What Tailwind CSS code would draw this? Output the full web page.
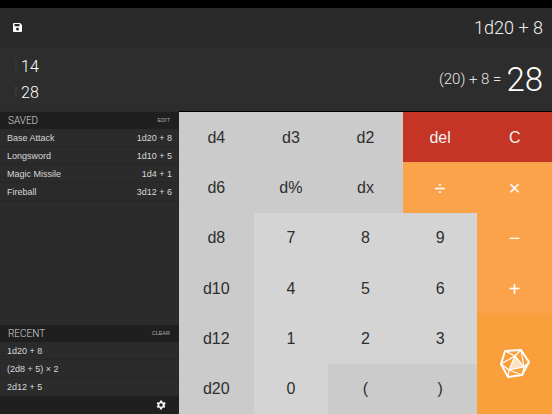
<!DOCTYPE html>
<html lang="en">
<head>
<meta charset="UTF-8">
<title>Dice Calculator</title>
<script src="https://cdn.jsdelivr.net/npm/@tailwindcss/browser@4"></script>
</head>
<body class="w-[552px] h-[414px] overflow-hidden bg-black font-['Liberation_Sans'] text-white">
<div class="flex flex-col h-full pt-[8px]">
  <!-- expression -->
  <header class="h-[39px] shrink-0 flex items-center justify-between pl-[13px] pr-[9px] bg-[#2a2a2a]">
    <svg class="w-[9px] h-[9px]" viewBox="0 0 9 9"><path fill="#fff" fill-rule="evenodd" d="M1 0h6l2 2v6a1 1 0 0 1-1 1H1a1 1 0 0 1-1-1V1a1 1 0 0 1 1-1zM1.500 1v2.200h5V1zM4.500 4.600a1.500 1.500 0 1 0 0 3 1.500 1.500 0 0 0 0-3z"/></svg>
    <span class="font-['Roboto'] text-[18px] leading-none font-light text-[#f2f2f2]">1d20 + 8</span>
  </header>
  <!-- results -->
  <section class="h-[64px] shrink-0 flex items-center justify-between pl-[14px] pr-[9px] bg-[#2d2d2d] font-['Roboto'] font-light">
    <div class="flex flex-col gap-[8px] pt-[2px]">
      <div class="flex items-center gap-[3px]">
        <span class="w-[4px] text-[3px] leading-[3.500px] text-center text-[#666]">H<br>A<br>L<br>F</span>
        <span class="text-[16px] leading-[18px]">14</span>
      </div>
      <div class="flex items-center gap-[3px]">
        <span class="w-[4px] text-[3px] leading-[3.500px] text-center text-[#666]">M<br>A<br>X</span>
        <span class="text-[16px] leading-[18px]">28</span>
      </div>
    </div>
    <div class="flex items-center gap-[5px]">
      <span class="text-[15px] text-[#e6e6e6]">(20) + 8 =</span>
      <span class="text-[33px] leading-none">28</span>
    </div>
  </section>
  <div class="flex-1 flex min-h-0">
    <!-- sidebar -->
    <aside class="w-[179px] shrink-0 flex flex-col bg-[#2b2b2b] text-[#d8d8d8]">
      <div class="h-[17px] mt-[1px] flex items-center justify-between pl-[8px] pr-[9px] bg-[#1f1f1f]">
        <span class="font-['Roboto'] text-[10px] font-light">SAVED</span><span class="text-[5.500px] text-[#aaa]">EDIT</span>
      </div>
      <ul class="text-[9px]">
        <li class="h-[18px] pt-[2px] flex items-center justify-between px-[7px] border-b border-[#262626]"><span>Base Attack</span><span>1d20 + 8</span></li>
        <li class="h-[18px] pt-[2px] flex items-center justify-between px-[7px] border-b border-[#262626]"><span>Longsword</span><span>1d10 + 5</span></li>
        <li class="h-[18px] pt-[2px] flex items-center justify-between px-[7px] border-b border-[#262626]"><span>Magic Missile</span><span>1d4 + 1</span></li>
        <li class="h-[18px] pt-[2px] flex items-center justify-between px-[7px] border-b border-[#262626]"><span>Fireball</span><span>3d12 + 6</span></li>
      </ul>
      <div class="flex-1"></div>
      <div class="h-[17px] flex items-center justify-between pl-[8px] pr-[9px] bg-[#1f1f1f]">
        <span class="font-['Roboto'] text-[10px] font-light">RECENT</span><span class="text-[5.500px] text-[#aaa]">CLEAR</span>
      </div>
      <ul class="text-[9px]">
        <li class="h-[18px] pt-[2px] flex items-center px-[7px] border-b border-[#262626]">1d20 + 8</li>
        <li class="h-[18px] pt-[2px] flex items-center px-[7px] border-b border-[#262626]">(2d8 + 5) × 2</li>
        <li class="h-[18px] pt-[2px] flex items-center px-[7px]">2d12 + 5</li>
      </ul>
      <footer class="h-[18px] flex items-center justify-end pr-[12px] bg-[#1f1f1f]">
        <svg class="w-[12px] h-[12px]" viewBox="0 0 24 24"><path fill="#f2f2f2" fill-rule="evenodd" d="M19.400 13a7.500 7.500 0 0 0 0-2l2.100-1.600-2-3.500-2.500 1a7.500 7.500 0 0 0-1.700-1L14 3.200h-4l-.4 2.700a7.500 7.500 0 0 0-1.700 1l-2.500-1-2 3.500L5.500 11a7.500 7.500 0 0 0 0 2l-2.100 1.600 2 3.500 2.500-1a7.500 7.500 0 0 0 1.700 1l.4 2.700h4l.4-2.700a7.500 7.500 0 0 0 1.700-1l2.500 1 2-3.500zM12 15.500a3.500 3.500 0 1 1 0-7 3.500 3.500 0 0 1 0 7z"/></svg>
      </footer>
    </aside>
    <!-- keypad -->
    <main class="flex-1 grid grid-cols-5 grid-rows-6 mt-[1px] text-[16px] text-[#2e2e2e] bg-[#cbcbcb]">
      <button class="pt-[1px] bg-[#cbcbcb]">d4</button>
      <button class="pt-[1px] bg-[#cbcbcb]">d3</button>
      <button class="pt-[1px] bg-[#cbcbcb]">d2</button>
      <button class="pt-[1px] bg-[#c43525] text-[#f2f2f2]">del</button>
      <button class="pt-[1px] bg-[#c43525] text-[#f2f2f2]">C</button>
      <button class="pt-[1px] bg-[#cbcbcb]">d6</button>
      <button class="pt-[1px] bg-[#cbcbcb]">d%</button>
      <button class="pt-[1px] bg-[#cbcbcb]">dx</button>
      <button class="pt-[1px] bg-[#fba34b] text-white text-[20px]">÷</button>
      <button class="pt-[1px] bg-[#fba34b] text-white text-[20px]">×</button>
      <button class="pt-[1px] bg-[#cbcbcb]">d8</button>
      <button class="pt-[1px] bg-[#d4d4d4]">7</button>
      <button class="pt-[1px] bg-[#d4d4d4]">8</button>
      <button class="pt-[1px] bg-[#d4d4d4]">9</button>
      <button class="pt-[1px] bg-[#fba34b] text-white text-[20px]">−</button>
      <button class="pt-[1px] bg-[#cbcbcb]">d10</button>
      <button class="pt-[1px] bg-[#d4d4d4]">4</button>
      <button class="pt-[1px] bg-[#d4d4d4]">5</button>
      <button class="pt-[1px] bg-[#d4d4d4]">6</button>
      <button class="pt-[1px] bg-[#fba34b] text-white text-[20px]">+</button>
      <button class="pt-[1px] bg-[#cbcbcb]">d12</button>
      <button class="pt-[1px] bg-[#d4d4d4]">1</button>
      <button class="pt-[1px] bg-[#d4d4d4]">2</button>
      <button class="pt-[1px] bg-[#d4d4d4]">3</button>
      <button class="row-span-2 bg-[#f99f3c] flex items-center justify-center">
        <svg class="w-[30px] h-[30px]" viewBox="0 0 30 30" fill="none" stroke="#fff">
          <path fill="#fff" fill-opacity=".7" stroke="none" d="M15 7 24 18 9 21z"/>
          <path stroke-width="1.200" stroke-linejoin="round" d="M5 2 15 7 21 1M21 1 24 18 29 13M24 18 22 26 9 21 8 28M9 21 1 15 15 7 24 18 9 21 15 7"/>
          <path stroke-width="2" stroke-linejoin="round" d="M5 2 21 1 29 13 22 26 8 28 1 15z"/>
        </svg>
      </button>
      <button class="pt-[1px] bg-[#cbcbcb]">d20</button>
      <button class="pt-[1px] bg-[#d4d4d4]">0</button>
      <button class="pt-[1px] bg-[#cbcbcb]">(</button>
      <button class="pt-[1px] bg-[#cbcbcb]">)</button>
    </main>
  </div>
</div>
</body>
</html>
